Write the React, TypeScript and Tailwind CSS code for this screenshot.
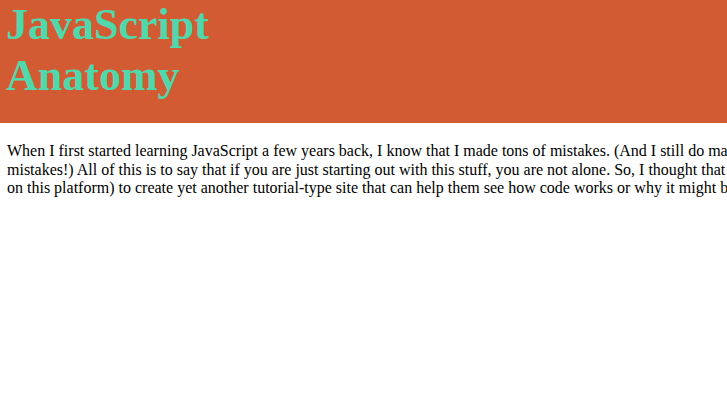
export default function App() {
  return (
    <div className="min-h-screen w-full overflow-hidden bg-white font-['Liberation_Serif','Times_New_Roman',serif] text-black">
      <header className="bg-[#d35b34] pb-[22px] pl-[6px]">
        <h1 className="m-0 text-[44px] font-bold leading-[1.15] text-[#50d8ad]">
          JavaScript
          <br />
          Anatomy
        </h1>
      </header>
      <p className="mt-[19px] w-[800px] pl-[7px] text-[16px] leading-[1.15]">
        When I first started learning JavaScript a few years back, I know that I made tons of
        mistakes. (And I still do make mistakes!) All of this is to say that if you are just
        starting out with this stuff, you are not alone. So, I thought that I'd (as new on this
        platform) to create yet another tutorial-type site that can help them see how code works
        or why it might break.
      </p>
    </div>
  );
}
